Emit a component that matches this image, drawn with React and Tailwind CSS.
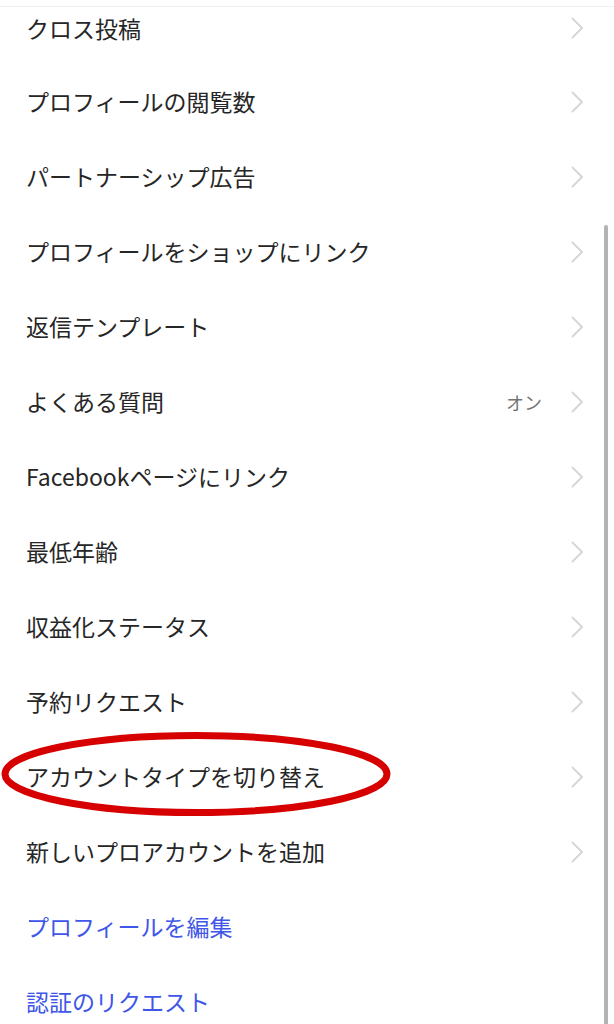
import React from "react";

const items = [
  { label: "プロフィールの閲覧数" },
  { label: "パートナーシップ広告" },
  { label: "プロフィールをショップにリンク" },
  { label: "返信テンプレート" },
  { label: "よくある質問", value: "オン" },
  { label: "Facebookページにリンク" },
  { label: "最低年齢" },
  { label: "収益化ステータス" },
  { label: "予約リクエスト" },
  { label: "アカウントタイプを切り替え" },
  { label: "新しいプロアカウントを追加" },
];

function Chevron() {
  return (
    <svg width="13" height="22" viewBox="0 0 13 22" className="shrink-0">
      <polyline
        points="1.5,1.5 11,11 1.5,20.5"
        fill="none"
        stroke="#d6d6db"
        strokeWidth="2"
        strokeLinecap="round"
        strokeLinejoin="round"
      />
    </svg>
  );
}

function Row({ label, value, first }) {
  return (
    <div
      className={`flex items-center justify-between pl-[26px] pr-[30px] ${
        first ? "h-[42px]" : "h-[75px]"
      }`}
    >
      <span className="text-[23px] leading-none text-[#262626]">{label}</span>
      <div className="flex items-center gap-[29px]">
        {value && <span className="text-[18px] leading-none text-[#737373]">{value}</span>}
        <Chevron />
      </div>
    </div>
  );
}

export default function App() {
  return (
    <div
      className="relative w-[614px] h-[1024px] overflow-hidden bg-white"
      style={{ fontFamily: '"Noto Sans CJK JP", "Noto Sans", sans-serif' }}
    >
      <div className="h-[6px]" />
      <div className="h-[1px] bg-[#efefef]" />
      <div className="flex flex-col">
        <Row label="クロス投稿" first />
        <div className="h-[15px]" />
        {items.map((it) => (
          <Row key={it.label} label={it.label} value={it.value} />
        ))}
        <div className="flex items-center h-[75px] pl-[26px]">
          <span className="text-[23px] leading-none text-[#4056e8]">プロフィールを編集</span>
        </div>
        <div className="flex items-center h-[75px] pl-[26px]">
          <span className="text-[23px] leading-none text-[#4056e8]">認証のリクエスト</span>
        </div>
      </div>

      {/* overlay scrollbar */}
      <div className="absolute left-[604px] top-[225px] w-[4px] h-[820px] rounded-full bg-[#b3b3b3]" />

      {/* red annotation ellipse */}
      <svg className="absolute left-0 top-0 pointer-events-none" width="614" height="1024">
        <ellipse cx="196" cy="774" rx="191" ry="38.5" fill="none" stroke="#d60000" strokeWidth="7" />
      </svg>
    </div>
  );
}
